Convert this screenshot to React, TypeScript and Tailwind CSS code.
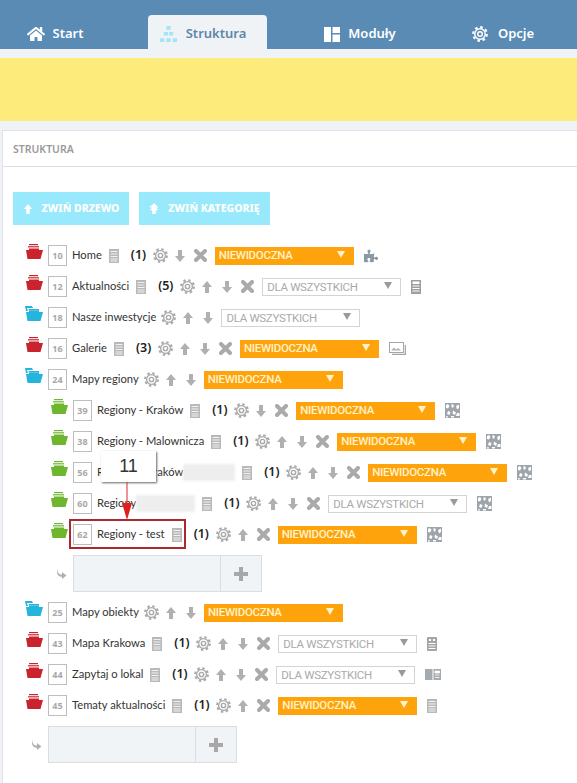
import { FaHome, FaPuzzlePiece } from 'react-icons/fa';

type FolderColor = 'red' | 'blue' | 'green';
type SideIcon = 'puzzle' | 'news' | 'gallery' | 'map' | 'mapDoc' | 'book' | 'doc';

interface RowData {
  id: number;
  label: string;
  folder: FolderColor;
  count?: number;
  up?: boolean;
  down?: boolean;
  remove?: boolean;
  hidden?: boolean;
  icon?: SideIcon;
  blur?: number;
}

const folderColors: Record<FolderColor, string> = {
  red: '#c9242e',
  blue: '#25b4dc',
  green: '#6eb62e',
};

function Folder({ color }: { color: FolderColor }) {
  const fill = folderColors[color];
  return (
    <svg width="18" height="15" viewBox="0 0 18 15" className="mb-2 mr-[5px] shrink-0">
      {color === 'blue' ? (
        <>
          <path d="M0 0h7l1 2H2l1 3H1z" fill={fill} />
          <path d="M3.500 3h10.500v1.500H4z" fill={fill} />
        </>
      ) : (
        <>
          <path d="M4 0h9v1.200H4z" fill={fill} />
          <path d="M3 2.200h11v1.200H3z" fill={fill} />
        </>
      )}
      <path d="M1 6h3V4.500h10V6h4l-2.500 9h-13z" fill={fill} />
    </svg>
  );
}

function Gear({ color = '#a9a9a9', size = 15 }: { color?: string; size?: number }) {
  return (
    <svg width={size} height={size} viewBox="0 0 16 16" fill="none" stroke={color} className="block shrink-0">
      <circle cx="8" cy="8" r="5.200" strokeWidth="1.400" />
      <circle cx="8" cy="8" r="6.800" strokeWidth="2.200" strokeDasharray="2.600 2.740" />
      <circle cx="8" cy="8" r="2.300" strokeWidth="1.500" />
    </svg>
  );
}

function Arrow({ dir }: { dir: 'up' | 'down' }) {
  return (
    <svg width="10" height="12" viewBox="0 0 10 12" className={`block shrink-0 ${dir === 'down' ? 'rotate-180' : ''}`}>
      <path d="M5 0l5 6H7v6H3V6H0z" fill="#b0b0b0" />
    </svg>
  );
}

function Cross() {
  return (
    <svg width="13" height="13" viewBox="0 0 13 13" className="block shrink-0">
      <path d="M2 2l9 9M11 2l-9 9" stroke="#aaaaaa" strokeWidth="4" strokeLinecap="round" />
    </svg>
  );
}

function Doc() {
  return (
    <svg width="10" height="14" viewBox="0 0 10 14" className="block shrink-0">
      <rect width="10" height="14" fill="#b9b9b9" />
      <path d="M1.500 2.500h7M1.500 5h7M1.500 7.500h7M1.500 10h7M1.500 12h7" stroke="#ffffff" strokeWidth="0.800" />
    </svg>
  );
}

function MapIcon() {
  return (
    <svg width="15" height="15" viewBox="0 0 15 15" className="block shrink-0">
      <rect width="15" height="15" fill="#9ea4aa" />
      <path d="M1 2l2-1 1.500 2L3 5.500 1 5zM6.500 1l2.500 1-1 3-1.500-1zM11 3l3-1.500V5l-2 1.500zM3 8l2.500 1-1 3-2.500-1zM8 7.500l3 2-1 2.500-2.500-1.500zM12 10h2.500v3H11zM1 13l2 .5v1H1zM6 13h3v1.500H6z" fill="#ffffff" />
    </svg>
  );
}

function ExtraIcon({ icon }: { icon: SideIcon }) {
  if (icon === 'puzzle') return <FaPuzzlePiece size={14} color="#8b9aa0" className="block shrink-0" />;
  if (icon === 'map') return <MapIcon />;
  if (icon === 'doc') return <Doc />;
  if (icon === 'news') {
    return (
      <svg width="10" height="14" viewBox="0 0 10 14" className="block shrink-0">
        <rect width="10" height="14" fill="#9e9e9e" />
        <path d="M1.500 1.500h7v2.500h-7z" fill="#ffffff" />
        <path d="M1.500 6h7M1.500 8.500h7M1.500 11h7" stroke="#ffffff" />
      </svg>
    );
  }
  if (icon === 'mapDoc') {
    return (
      <svg width="10" height="14" viewBox="0 0 10 14" className="block shrink-0">
        <rect width="10" height="14" rx="1" fill="#a5a5a5" />
        <path d="M2 2h2v2H2zM6 2h2v2H6z" fill="#ffffff" />
        <path d="M1.500 6.500h7M1.500 9h7M1.500 11.500h7" stroke="#ffffff" />
      </svg>
    );
  }
  if (icon === 'book') {
    return (
      <svg width="16" height="11" viewBox="0 0 16 11" className="block shrink-0">
        <rect width="7.500" height="11" fill="#a5aaae" />
        <rect x="8.500" width="7.500" height="11" fill="#a5aaae" />
        <path d="M10 2h4.500v2H10zM10 6h4.500M10 8.500h4.500" stroke="#ffffff" strokeWidth="0.800" fill="#ffffff" />
      </svg>
    );
  }
  return (
    <svg width="17" height="13" viewBox="0 0 17 13" className="block shrink-0">
      <rect x="0.500" y="0.500" width="14" height="10" fill="#ffffff" stroke="#a5a5a5" />
      <path d="M2 8.500l3-3 2 2 2-1.500 3 2.500z" fill="#b0b0b0" />
      <path d="M16.500 3v9.500H3" fill="none" stroke="#a5a5a5" strokeWidth="1.500" />
    </svg>
  );
}

function StatusSelect({ hidden }: { hidden?: boolean }) {
  return (
    <div className="relative w-[139px] shrink-0">
      <select
        defaultValue={hidden ? 'NIEWIDOCZNA' : 'DLA WSZYSTKICH'}
        className={`block w-full appearance-none rounded-none pl-1 font-['Roboto',sans-serif] text-[11.500px] tracking-[-0.3px] outline-none ${
          hidden
            ? 'h-[18px] bg-[#ffa30d] font-medium text-[#fff3c9]'
            : 'h-[18px] border border-[#d4d4d4] bg-white text-[#aaaaaa]'
        }`}
      >
        <option>NIEWIDOCZNA</option>
        <option>DLA WSZYSTKICH</option>
      </select>
      <span
        className={`pointer-events-none absolute right-[9px] top-1 h-0 w-0 border-x-[4px] border-t-[7px] border-x-transparent ${
          hidden ? 'border-t-[#fff3c9]' : 'border-t-[#9a9a9a]'
        }`}
      />
    </div>
  );
}

function TreeRow({ row }: { row: RowData }) {
  return (
    <div className="flex h-[31px] items-center">
      <Folder color={row.folder} />
      <span className="mr-[5px] flex h-[21px] w-[19px] shrink-0 items-center justify-center border border-[#bdbdbd] text-[9px] font-bold text-[#a8a8a8]">
        {row.id}
      </span>
      <span className="whitespace-nowrap font-['Lato',sans-serif] text-[11.200px] text-[#333333]">{row.label}</span>
      {row.blur && <span className="h-[17px] bg-[#eeeeee] blur-[1px]" style={{ width: row.blur }} />}
      {row.count !== undefined && (
        <>
          <span className="ml-[7px]">
            <Doc />
          </span>
          <span className="ml-[12px] w-[14px] text-[12.500px] font-semibold text-[#222222]">({row.count})</span>
        </>
      )}
      <span className={row.count !== undefined ? 'ml-2' : 'ml-[5px]'}>
        <Gear />
      </span>
      {row.up && (
        <span className="ml-[7px]">
          <Arrow dir="up" />
        </span>
      )}
      {row.down && (
        <span className={row.up ? 'ml-[10px]' : 'ml-[7px]'}>
          <Arrow dir="down" />
        </span>
      )}
      {row.remove && (
        <span className="ml-[9px]">
          <Cross />
        </span>
      )}
      <span className="ml-2">
        <StatusSelect hidden={row.hidden} />
      </span>
      {row.icon && (
        <span className="ml-[10px]">
          <ExtraIcon icon={row.icon} />
        </span>
      )}
    </div>
  );
}

function AddForm() {
  return (
    <div className="my-[5px] flex items-center">
      <svg width="11" height="10" viewBox="0 0 11 10" className="ml-[6px] mr-[6px] shrink-0">
        <path d="M1.500 0C1.500 4 3 5.500 6 5.500V3l4.500 3.500L6 10V7.800C2.500 7.800 0 5 1.500 0z" fill="#b0b0b0" />
      </svg>
      <div className="flex h-[37px] w-[189px] border border-[#d9dee3] bg-[#f1f4f7]">
        <input className="h-full w-[147px] border-r border-[#d9dee3] bg-transparent outline-none" />
        <button className="flex flex-1 items-center justify-center">
          <svg width="14" height="14" viewBox="0 0 14 14">
            <path d="M5 0h4v5h5v4H9v5H5V9H0V5h5z" fill="#a8a8a8" />
          </svg>
        </button>
      </div>
    </div>
  );
}

const topRows: RowData[] = [
  { id: 10, label: 'Home', folder: 'red', count: 1, down: true, remove: true, hidden: true, icon: 'puzzle' },
  { id: 12, label: 'Aktualności', folder: 'red', count: 5, up: true, down: true, remove: true, icon: 'news' },
  { id: 18, label: 'Nasze inwestycje', folder: 'blue', up: true, down: true },
  { id: 16, label: 'Galerie', folder: 'red', count: 3, up: true, down: true, remove: true, hidden: true, icon: 'gallery' },
  { id: 24, label: 'Mapy regiony', folder: 'blue', up: true, down: true, hidden: true },
];

const nestedRows: RowData[] = [
  { id: 39, label: 'Regiony - Kraków', folder: 'green', count: 1, down: true, remove: true, hidden: true, icon: 'map' },
  { id: 38, label: 'Regiony - Malownicza', folder: 'green', count: 1, up: true, down: true, remove: true, hidden: true, icon: 'map' },
  { id: 56, label: 'Regiony - Kraków', folder: 'green', count: 1, up: true, down: true, remove: true, hidden: true, icon: 'map', blur: 52 },
  { id: 60, label: 'Regiony', folder: 'green', count: 1, up: true, down: true, remove: true, icon: 'map', blur: 59 },
  { id: 62, label: 'Regiony - test', folder: 'green', count: 1, up: true, remove: true, hidden: true, icon: 'map' },
];

const bottomRows: RowData[] = [
  { id: 25, label: 'Mapy obiekty', folder: 'blue', up: true, down: true, hidden: true },
  { id: 43, label: 'Mapa Krakowa', folder: 'red', count: 1, up: true, down: true, remove: true, icon: 'mapDoc' },
  { id: 44, label: 'Zapytaj o lokal', folder: 'red', count: 1, up: true, down: true, remove: true, icon: 'book' },
  { id: 45, label: 'Tematy aktualności', folder: 'red', count: 1, up: true, remove: true, hidden: true, icon: 'doc' },
];

export default function App() {
  return (
    <div className="relative h-[783px] w-[577px] overflow-hidden bg-[#f0f3f6] font-['Noto_Sans',sans-serif] text-[11.500px]">
      {/* Menu */}
      <nav className="flex h-[49px] items-end bg-[#5a8bb5] text-[13px] font-semibold text-white">
        <a className="flex h-[34px] w-[110px] items-center justify-center gap-2 pt-1">
          <FaHome size={18} />
          Start
        </a>
        <a className="ml-[38px] flex h-[34px] w-[119px] items-center justify-center gap-[9px] rounded-t-sm bg-[#f0f3f6] pr-[9px] pt-1 text-[#5d86aa]">
          <svg width="17" height="16" viewBox="0 0 16 15" fill="#a5e3f5">
            <path d="M6 0h4v3.500H6zM3.500 5.500h4V9h-4zM8.500 5.500h4V9h-4zM0 11.500h4V15H0zM6 11.500h4V15H6zM12 11.500h4V15h-4z" />
          </svg>
          Struktura
        </a>
        <a className="flex h-[34px] w-[186px] items-center justify-center gap-2 pt-1">
          <svg width="16" height="15" viewBox="0 0 16 15" fill="#ffffff">
            <path d="M0 0h7v15H0zM8.500 0H16v6H8.500zM8.500 7.500H16V15H8.500z" />
          </svg>
          Moduły
        </a>
        <a className="flex h-[34px] w-[100px] items-center justify-center gap-[10px] pt-1">
          <Gear color="#ffffff" size={16} />
          Opcje
        </a>
      </nav>

      <div className="mt-[9px] h-[63px] bg-[#fdec7c]" />

      {/* Panel */}
      <section className="ml-[2px] mt-[9px] h-[660px] border-l border-t border-[#dfe3e7] bg-white">
        <h2 className="flex h-[36px] items-center border-b border-[#dcdfe2] pl-[10px] pt-[2px] text-[10.500px] font-semibold text-[#9a9a9a]">
          STRUKTURA
        </h2>
        <div className="flex gap-[10px] pl-[10px] pt-[25px]">
          <button className="flex h-[33px] w-[116px] items-center justify-center gap-[9px] bg-[#97e9fb] text-[10.500px] font-extrabold text-white">
            <svg width="10" height="10" viewBox="0 0 10 12" fill="#ffffff">
              <path d="M5 0l5 6H7v6H3V6H0z" />
            </svg>
            ZWIŃ DRZEWO
          </button>
          <button className="flex h-[33px] w-[131px] items-center justify-center gap-[9px] bg-[#97e9fb] text-[10.500px] font-extrabold text-white">
            <svg width="10" height="11" viewBox="0 0 10 12" fill="#ffffff">
              <path d="M5 0l5 5H7l3 3H7v4H3V8H0l3-3H0z" />
            </svg>
            ZWIŃ KATEGORIĘ
          </button>
        </div>

        <div className="pl-[22px] pt-[15px]">
          {topRows.map((row) => (
            <TreeRow key={row.id} row={row} />
          ))}
          <div className="pl-[25px]">
            {nestedRows.map((row) => (
              <TreeRow key={row.id} row={row} />
            ))}
            <AddForm />
          </div>
          {bottomRows.map((row) => (
            <TreeRow key={row.id} row={row} />
          ))}
          <AddForm />
        </div>
      </section>

      {/* Adnotacja */}
      <div className="absolute left-[69px] top-[519px] h-[30px] w-[117px] border-2 border-[#a92a2e]" />
      <div className="absolute left-[101px] top-[451px] flex h-[31px] w-[55px] items-center justify-center bg-white font-['Liberation_Sans',sans-serif] text-[18px] text-[#333333] shadow-[1px_1px_2px_#666666]">
        11
      </div>
      <svg width="12" height="38" viewBox="0 0 12 38" className="absolute left-[121px] top-[482px]">
        <path d="M6 0v24" stroke="#d92b2b" strokeWidth="1" />
        <path d="M1 21h10l-5 17z" fill="#e01f1f" />
      </svg>
    </div>
  );
}
